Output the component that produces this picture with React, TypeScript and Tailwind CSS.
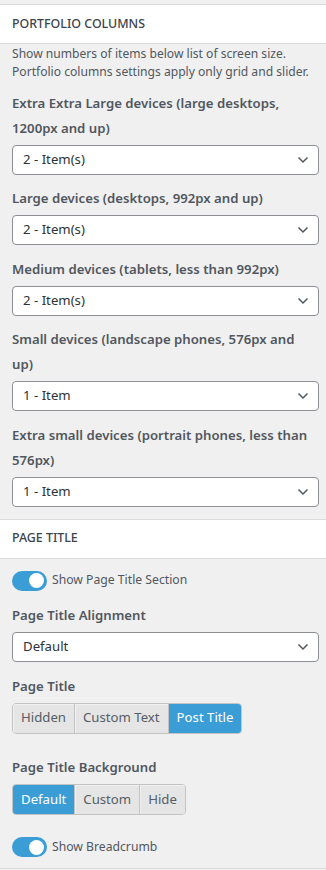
import React from 'react';

const font = { fontFamily: '"Noto Sans", "Open Sans", sans-serif' };

const Chevron = () => (
  <svg width="12" height="8" viewBox="0 0 12 8" className="text-[#50575e]">
    <path d="M1.5 1.5 L6 6 L10.5 1.5" fill="none" stroke="currentColor" strokeWidth="1.5" />
  </svg>
);

const SectionHeader = ({ title }: { title: string }) => (
  <div className="h-[40px] bg-white border-y border-[#dcdcde] px-3 flex items-center text-[12.4px] uppercase text-[#3c434a] font-medium">
    {title}
  </div>
);

const Select = ({ value }: { value: string }) => (
  <div className="h-[30px] bg-white border border-[#8c8f94] rounded-[4px] flex items-center justify-between pl-[10px] pr-[9px] text-[13.2px] text-[#2c3338]">
    <span>{value}</span>
    <Chevron />
  </div>
);

const Label = ({ children }: { children: React.ReactNode }) => (
  <div className="text-[13.2px] leading-[25px] font-semibold text-[#50575e] mb-[4px] pr-[10px]">{children}</div>
);

const Field = ({ label, value, first }: { label: string; value: string; first?: boolean }) => (
  <div className={first ? 'mt-[9.5px]' : 'mt-[11.5px]'}>
    <Label>{label}</Label>
    <Select value={value} />
  </div>
);

const Toggle = ({ label }: { label: string }) => (
  <div className="flex items-center gap-[5px]">
    <div className="w-[35px] h-[20px] rounded-full bg-[#3a9dd6] flex items-center justify-end pr-[3px]">
      <div className="w-[15px] h-[15px] rounded-full bg-white" />
    </div>
    <span className="text-[12.2px] text-[#50575e]">{label}</span>
  </div>
);

const ButtonGroup = ({ items, active }: { items: string[]; active: string }) => (
  <div className="inline-flex h-[31px] rounded-[4px] overflow-hidden border border-[#c3c3c3]">
    {items.map((item, i) => (
      <div
        key={item}
        className={
          'flex items-center px-[8px] text-[13.2px] ' +
          (i > 0 ? 'border-l border-[#c3c3c3] ' : '') +
          (item === active ? 'bg-[#3a9dd6] text-white border-[#2f8bc2]' : 'bg-[#e5e5e5] text-[#555d66] shadow-[inset_1px_1px_0_#f0f0f0]')
        }
      >
        {item}
      </div>
    ))}
  </div>
);

export default function App() {
  return (
    <div style={font} className="w-[326px] min-h-[870px] bg-[#f0f0f1] pt-[4px]">
      {/* Portfolio columns */}
      <SectionHeader title="Portfolio Columns" />
      <div className="pl-3 pr-[7px] pb-[12px]">
        <p className="text-[12.1px] leading-[18px] text-[#50575e] mt-[1px]">
          Show numbers of items below list of screen size. Portfolio columns settings apply only grid and slider.
        </p>
        <Field first label="Extra Extra Large devices (large desktops, 1200px and up)" value="2 - Item(s)" />
        <Field label="Large devices (desktops, 992px and up)" value="2 - Item(s)" />
        <Field label="Medium devices (tablets, less than 992px)" value="2 - Item(s)" />
        <Field label="Small devices (landscape phones, 576px and up)" value="1 - Item" />
        <Field label="Extra small devices (portrait phones, less than 576px)" value="1 - Item" />
      </div>

      {/* Page title */}
      <SectionHeader title="Page Title" />
      <div className="pl-3 pr-[7px] pt-[12px] pb-[11px] border-b border-[#dcdcde]">
        <Toggle label="Show Page Title Section" />
        <div className="mt-[12.5px]">
          <Label>Page Title Alignment</Label>
          <Select value="Default" />
        </div>
        <div className="mt-[11.5px]">
          <Label>Page Title</Label>
          <ButtonGroup items={['Hidden', 'Custom Text', 'Post Title']} active="Post Title" />
        </div>
        <div className="mt-[21.5px]">
          <Label>Page Title Background</Label>
          <ButtonGroup items={['Default', 'Custom', 'Hide']} active="Default" />
        </div>
        <div className="mt-[22px]">
          <Toggle label="Show Breadcrumb" />
        </div>
      </div>
    </div>
  );
}
